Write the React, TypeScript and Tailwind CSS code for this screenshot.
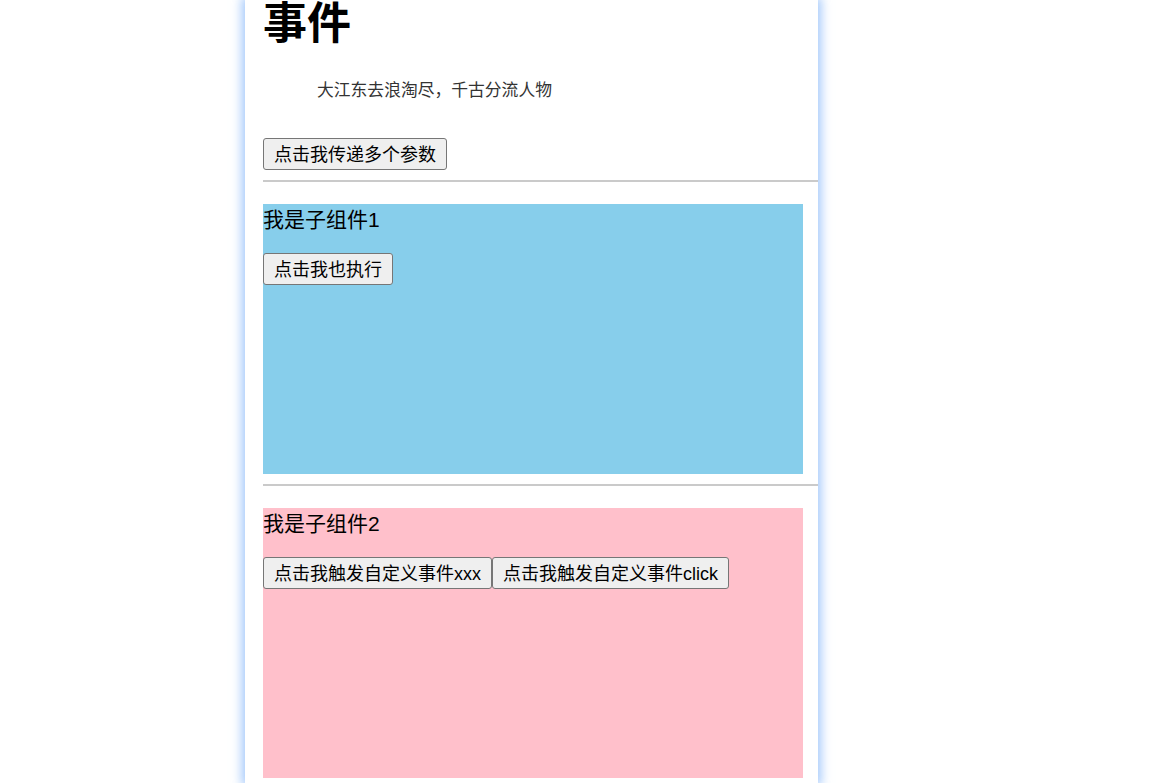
import React from 'react';

const sans = 'font-["Liberation_Sans","Noto_Sans_CJK_SC",sans-serif]';

function Btn({ children }: { children: React.ReactNode }) {
  return (
    <button className="h-[32px] px-[10px] pt-[1px] text-[18px] leading-[24px] text-black bg-[#efefef] border border-[#767676] rounded-[3px] whitespace-nowrap">
      {children}
    </button>
  );
}

function Child({ title, color, children }: { title: string; color: string; children: React.ReactNode }) {
  return (
    <div className={`w-[540px] h-[270px] ${color}`}>
      <div className="text-[21px] leading-[32px] text-black">{title}</div>
      <div className="flex mt-[17px]">{children}</div>
    </div>
  );
}

export default function App() {
  return (
    <div className={`w-full h-[783px] overflow-hidden bg-white ${sans}`}>
      <div className="ml-[245px] w-[573px] h-[783px] bg-white pl-[18px] shadow-[0_0_10px_3px_rgba(130,180,250,0.75)]">
        <h1 className="text-[44px] leading-[48px] font-bold text-black">事件</h1>
        <p className='mt-[30px] indent-[54px] text-[16.8px] leading-[26px] text-[#333] font-["Liberation_Serif","Noto_Sans_CJK_SC",serif]'>
          大江东去浪淘尽，千古分流人物
        </p>
        <div className="mt-[34px]">
          <Btn>点击我传递多个参数</Btn>
        </div>
        <div className="mt-[10px] h-[2px] bg-[#cacaca]" />
        <div className="mt-[22px]">
          <Child title="我是子组件1" color="bg-[#87ceeb]">
            <Btn>点击我也执行</Btn>
          </Child>
        </div>
        <div className="mt-[10px] h-[2px] bg-[#cacaca]" />
        <div className="mt-[22px]">
          <Child title="我是子组件2" color="bg-[#ffc0cb]">
            <Btn>点击我触发自定义事件xxx</Btn>
            <Btn>点击我触发自定义事件click</Btn>
          </Child>
        </div>
      </div>
    </div>
  );
}
